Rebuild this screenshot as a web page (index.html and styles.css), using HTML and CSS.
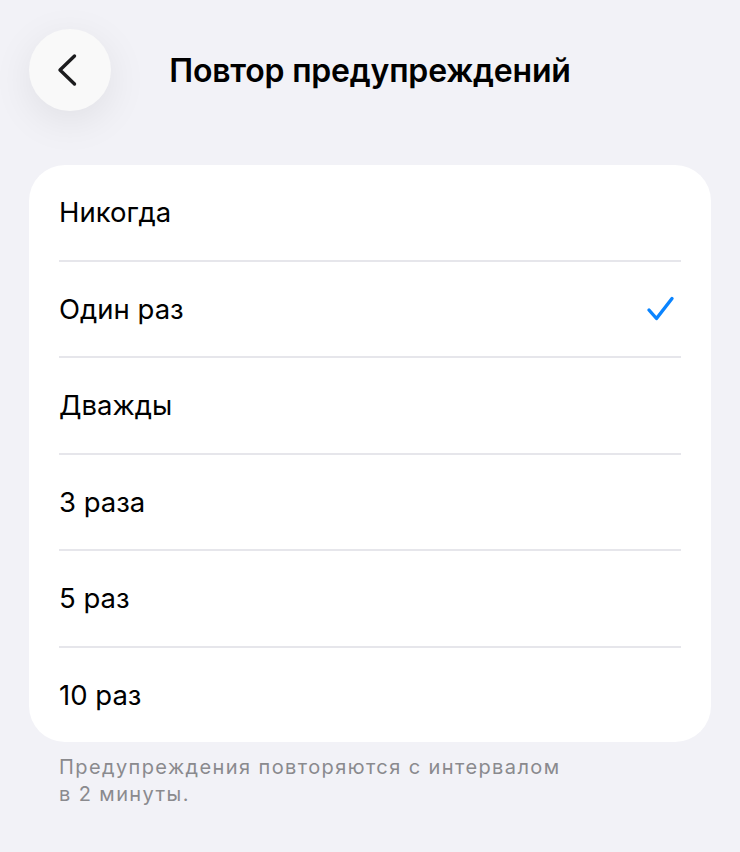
FILE: index.html
```html
<!DOCTYPE html>
<html lang="ru">
<head>
  <meta charset="UTF-8">
  <meta name="viewport" content="width=device-width, initial-scale=1.0">
  <title>Повтор предупреждений</title>
  <link rel="stylesheet" href="styles.css">
</head>
<body>

  <header class="top-bar">
    <button class="back-btn" aria-label="Назад">
      <svg width="20" height="34" viewBox="0 0 20 34">
        <path d="M17.5 3 L3 17 L17.5 31" fill="none" stroke="#1c1c1e" stroke-width="3.4" stroke-linecap="round" stroke-linejoin="round"/>
      </svg>
    </button>
    <h1 class="title">Повтор предупреждений</h1>
    <span></span>
  </header>

  <ul class="option-list">
    <li class="option"><div class="option-inner">Никогда</div></li>
    <li class="option"><div class="option-inner">Один раз
      <svg class="check" width="30" height="30" viewBox="0 0 30 30">
        <path d="M4 16 L11.5 24.5 L27 4.5" fill="none" stroke="#0a84ff" stroke-width="3.4" stroke-linecap="round" stroke-linejoin="round"/>
      </svg>
    </div></li>
    <li class="option"><div class="option-inner">Дважды</div></li>
    <li class="option"><div class="option-inner">3 раза</div></li>
    <li class="option"><div class="option-inner">5 раз</div></li>
    <li class="option"><div class="option-inner">10 раз</div></li>
  </ul>

  <p class="footnote">Предупреждения повторяются с интервалом<br>в 2 минуты.</p>

</body>
</html>
```

FILE: styles.css
```css
body {
  font-family: Inter, "Noto Sans", Arial, sans-serif;
  background: #f2f2f7;
  color: #000;
  margin: 0;
  padding: 0;
}

.top-bar {
  display: grid;
  grid-template-columns: 82px 1fr 82px;
  align-items: center;
  padding: 29px 29px 0;
}

.back-btn {
  width: 82px;
  height: 82px;
  border: none;
  border-radius: 50%;
  background: #f9f9f9;
  box-shadow: 0 10px 40px rgba(0, 0, 0, 0.08);
  display: flex;
  align-items: center;
  justify-content: center;
  padding: 0 6px 0 0;
}

.title {
  margin: 0;
  text-align: center;
  font-size: 32px;
  font-weight: 600;
  letter-spacing: -0.2px;
}

.option-list {
  list-style: none;
  margin: 54px 29px 0;
  padding: 0;
  background: #fff;
  border-radius: 36px;
}

.option {
  padding-left: 30px;
}

.option-inner {
  height: 94.5px;
  display: flex;
  align-items: center;
  justify-content: space-between;
  padding-right: 6px;
  margin-right: 30px;
  border-bottom: 2px solid #e6e6eb;
  font-size: 27.5px;
}

.option:last-child .option-inner {
  border-bottom: none;
}

.footnote {
  margin: 12px 29px 0;
  padding-left: 30px;
  font-size: 20px;
  line-height: 27px;
  letter-spacing: 1.4px;
  color: #8a8a8e;
}
```
